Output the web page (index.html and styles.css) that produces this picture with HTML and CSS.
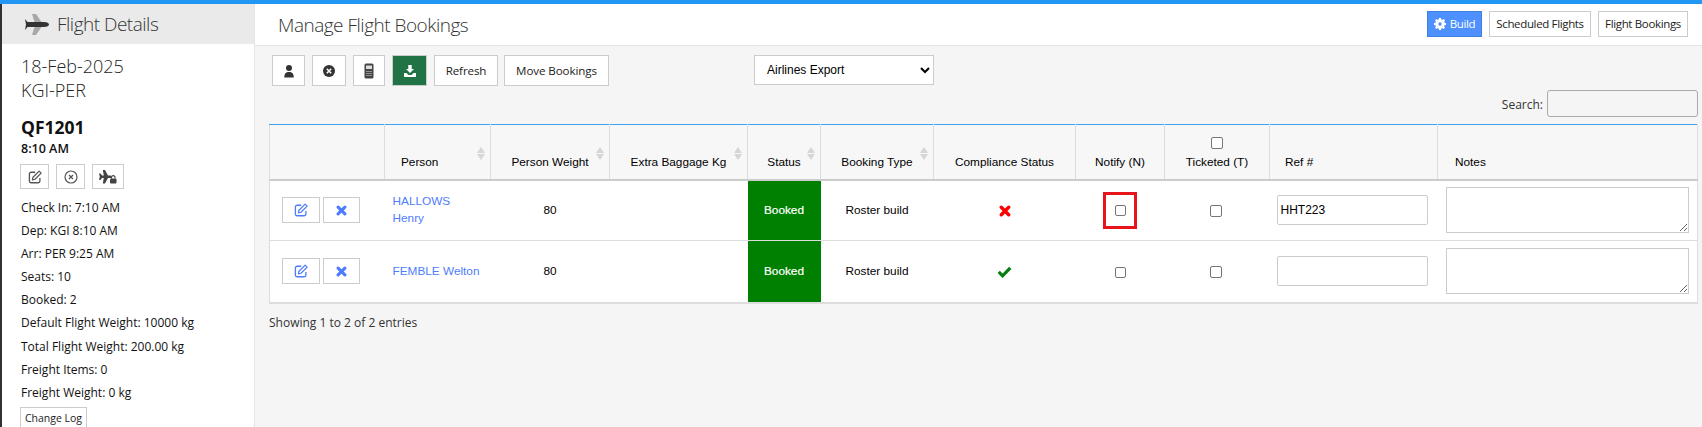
FILE: index.html
```html
<!DOCTYPE html>
<html lang="en">
<head>
<meta charset="utf-8">
<title>Manage Flight Bookings</title>
<link rel="stylesheet" href="styles.css">
</head>
<body>
<svg class="defs" width="0" height="0" aria-hidden="true">
  <symbol id="i-edit" viewBox="0 0 16 16"><path d="M8.200 2.600H3.600A2 2 0 0 0 1.600 4.600v8a2 2 0 0 0 2 2h8a2 2 0 0 0 2-2V9" fill="none" stroke="currentColor" stroke-width="1.500"/><path d="M12.700 1.300l2.300 2.300-7 7-3 .7.7-3z" fill="none" stroke="currentColor" stroke-width="1.400" stroke-linejoin="round"/></symbol>
  <symbol id="i-x" viewBox="0 0 12 12"><path d="M2.300 2.300l7.400 7.400M9.700 2.300l-7.400 7.400" fill="none" stroke="currentColor" stroke-width="3.400" stroke-linecap="round"/></symbol>
  <symbol id="i-check" viewBox="0 0 14 12"><path d="M1.600 6.400l3.600 3.600L12.400 2.600" fill="none" stroke="currentColor" stroke-width="3"/></symbol>
</svg>
<div class="topbar"></div>
<div class="app">
  <aside class="side">
    <div class="side-head">
      <svg class="side-plane" viewBox="0 0 24 21"><path d="M7 0h4l5.500 8h-7zM9.500 13h7L11 21H7z" fill="#a8a8a8"/><path d="M0 5l2.500 3H19c3 0 5 1.100 5 2.500S22 13 19 13H2.500L0 16l1-5.500z" fill="#333"/></svg>
      <h2 class="side-title">Flight Details</h2>
    </div>
    <div class="side-body">
      <div class="date">18-Feb-2025</div>
      <div class="date">KGI-PER</div>
      <div class="flight">QF1201</div>
      <div class="time">8:10 AM</div>
      <div class="side-actions">
        <button class="btn sq w29"><svg class="ic14"><use href="#i-edit"/></svg></button>
        <button class="btn sq w29"><svg class="ic14" viewBox="0 0 14 14"><circle cx="7" cy="7" r="6" fill="none" stroke="currentColor" stroke-width="1.200"/><path d="M5 5l4 4M9 5l-4 4" stroke="currentColor" stroke-width="1.300"/></svg></button>
        <button class="btn sq w32"><svg class="ic-lock" viewBox="0 0 18 14"><path d="M0 3.500h1.500L3 5.500h1.800L3.800 0h2.200l3 5.500h2c1 0 1.700.6 1.700 1.250S13 8 12 8H9l-3 5.500H3.800l1-5.500H3l-1.500 2H0l.8-3.250z" fill="#444"/><rect x="11" y="8.500" width="6.500" height="5" rx="1" fill="#444"/><path d="M12.500 8.500V7a1.800 1.800 0 0 1 3.500 0v1.500" fill="none" stroke="#444" stroke-width="1.100"/></svg></button>
      </div>
      <ul class="facts">
        <li><b>Check In:</b> 7:10 AM</li>
        <li><b>Dep:</b> KGI 8:10 AM</li>
        <li><b>Arr:</b> PER 9:25 AM</li>
        <li><b>Seats:</b> 10</li>
        <li><b>Booked:</b> 2</li>
        <li><b>Default Flight Weight:</b> 10000 kg</li>
        <li><b>Total Flight Weight:</b> 200.00 kg</li>
        <li><b>Freight Items:</b> 0</li>
        <li><b>Freight Weight:</b> 0 kg</li>
      </ul>
      <button class="btn log">Change Log</button>
    </div>
  </aside>
  <main class="main">
    <header class="head">
      <h1 class="title">Manage Flight Bookings</h1>
      <div class="head-actions">
        <button class="btn hb build"><svg class="ic12" viewBox="0 0 12 12"><path fill-rule="evenodd" d="M5 0h2l.3 1.600 1 .4L9.700 1l1.400 1.400-1 1.300.4 1L12 5v2l-1.600.3-.4 1 1 1.300-1.400 1.400-1.300-1-1 .4L7 12H5l-.3-1.600-1-.4-1.300 1-1.400-1.400 1-1.300-.4-1L0 7V5l1.600-.3.4-1-1-1.300L2.400 1l1.300 1 1-.4zM6 4.300a1.700 1.700 0 1 0 0 3.400 1.700 1.700 0 0 0 0-3.400z" fill="currentColor"/></svg>Build</button>
        <button class="btn hb sched">Scheduled Flights</button>
        <button class="btn hb fb">Flight Bookings</button>
      </div>
    </header>
    <div class="content">
      <div class="toolbar">
        <button class="btn tb w33"><svg class="ic14" viewBox="0 0 14 14"><circle cx="7" cy="4" r="3" fill="#333"/><path d="M2.300 13.500c0-4 1.500-5.500 4.700-5.500s4.700 1.500 4.700 5.500z" fill="#333"/></svg></button>
        <button class="btn tb w34"><svg class="ic14" viewBox="0 0 14 14"><circle cx="7" cy="7" r="6" fill="#333"/><path d="M4.800 4.800l4.400 4.400M9.200 4.800l-4.400 4.400" stroke="#fff" stroke-width="1.600"/></svg></button>
        <button class="btn tb w32"><svg class="ic16" viewBox="0 0 12 16"><rect x="1.500" y="0.500" width="9" height="15" rx="1.500" fill="#444"/><rect x="3" y="2.500" width="6" height="3.500" fill="#ddd"/><path d="M3.500 8h1v1h-1zM5.500 8h1v1h-1zM7.500 8h1v1h-1zM3.500 10h1v1h-1zM5.500 10h1v1h-1zM7.500 10h1v1h-1zM3.500 12h1v1h-1zM5.500 12h1v1h-1zM7.500 12h1v1h-1z" fill="#ddd"/></svg></button>
        <button class="btn tb w35 export"><svg class="ic14" viewBox="0 0 14 14"><path d="M5.300 1h3.400v4h2.300L7 9 3 5h2.300z" fill="#fff"/><path d="M1 9h2.500L5.500 11h3L10.500 9H13v4H1z" fill="#fff"/></svg></button>
        <button class="btn tb txt refresh">Refresh</button>
        <button class="btn tb txt move">Move Bookings</button>
        <select class="export-select"><option>Airlines Export</option></select>
      </div>
      <div class="search"><label class="search-label" for="q">Search:</label><input class="search-input" id="q" type="text"></div>
      <table class="grid">
        <colgroup>
          <col class="c1"><col class="c2"><col class="c3"><col class="c4"><col class="c5"><col class="c6"><col class="c7"><col class="c8"><col class="c9"><col class="c10"><col class="c11">
        </colgroup>
        <thead>
          <tr>
            <th></th>
            <th class="sort left-p">Person</th>
            <th class="sort">Person Weight</th>
            <th class="sort">Extra Baggage Kg</th>
            <th class="sort">Status</th>
            <th class="sort">Booking Type</th>
            <th>Compliance Status</th>
            <th>Notify (N)</th>
            <th><input class="chk head-chk" type="checkbox"><br>Ticketed (T)</th>
            <th class="left-r">Ref #</th>
            <th class="left-n">Notes</th>
          </tr>
        </thead>
        <tbody>
          <tr class="r1">
            <td><div class="row-actions"><button class="btn ra e"><svg class="ic14"><use href="#i-edit"/></svg></button><button class="btn ra d"><svg class="ic10"><use href="#i-x"/></svg></button></div></td>
            <td class="person"><a href="#">HALLOWS<br>Henry</a></td>
            <td class="ctr">80</td>
            <td></td>
            <td class="booked">Booked</td>
            <td class="ctr">Roster build</td>
            <td class="ctr"><svg class="ic11 red"><use href="#i-x"/></svg></td>
            <td class="ctr"><span class="hl"><input class="chk sm" type="checkbox"></span></td>
            <td class="ctr"><input class="chk tk" type="checkbox"></td>
            <td class="ref"><input class="ref-input" type="text" value="HHT223"></td>
            <td class="note"><textarea class="note-input"></textarea></td>
          </tr>
          <tr class="r2">
            <td><div class="row-actions"><button class="btn ra e"><svg class="ic14"><use href="#i-edit"/></svg></button><button class="btn ra d"><svg class="ic10"><use href="#i-x"/></svg></button></div></td>
            <td class="person"><a href="#">FEMBLE Welton</a></td>
            <td class="ctr">80</td>
            <td></td>
            <td class="booked">Booked</td>
            <td class="ctr">Roster build</td>
            <td class="ctr"><svg class="ic12c green"><use href="#i-check"/></svg></td>
            <td class="ctr"><input class="chk sm" type="checkbox"></td>
            <td class="ctr"><input class="chk tk" type="checkbox"></td>
            <td class="ref"><input class="ref-input" type="text"></td>
            <td class="note"><textarea class="note-input"></textarea></td>
          </tr>
        </tbody>
      </table>
      <div class="info">Showing 1 to 2 of 2 entries</div>
    </div>
  </main>
</div>
</body>
</html>
```
FILE: styles.css
```css
* { box-sizing: border-box; }
html, body { margin: 0; height: 427px; overflow: hidden; }
body { font-family: "Open Sans", sans-serif; font-size: 12px; color: #111; background: #f5f5f5; }
.defs { position: absolute; }
.topbar { height: 4px; background: #2196f3; }
.app { display: flex; height: 423px; }
.side { width: 253px; margin-left: 2px; flex: none; background: #fff; border-right: 1px solid #e5e5e5; box-shadow: -2px 0 0 #2f3338; overflow: hidden; }
.side-head { height: 40px; background: #eaeaea; display: flex; align-items: center; padding-left: 23px; gap: 8px; }
.side-plane { width: 24px; height: 21px; flex: none; }
.side-title { margin: 0; font-size: 19px; font-weight: 300; color: #333; letter-spacing: -0.5px; }
.side-body { padding: 10px 0 0 19px; }
.date { font-size: 18px; font-weight: 300; line-height: 24px; color: #222; }
.flight { font-size: 17.500px; font-weight: 700; line-height: 24px; margin-top: 13px; color: #111; }
.time { font-size: 12.500px; font-weight: 600; line-height: 16px; margin-top: 2px; color: #111; }
.side-actions { display: flex; gap: 7px; margin: 7px 0 0 -1px; }
.btn { background: #fff; border: 1px solid #ccc; font-family: "Open Sans", sans-serif; font-size: 12px; color: #222; padding: 0; display: inline-flex; align-items: center; justify-content: center; }
.sq { height: 25px; color: #555; }
.w29 { width: 29px; }
.w32 { width: 32px; }
.w33 { width: 33px; }
.w34 { width: 34px; }
.w35 { width: 35px; }
.ic14 { width: 14px; height: 14px; }
.ic16 { width: 12px; height: 16px; }
.ic12 { width: 12px; height: 12px; margin-right: 4px; }
.ic10 { width: 11px; height: 11px; }
.ic11 { width: 12px; height: 12px; vertical-align: middle; }
.ic12c { width: 15px; height: 13px; vertical-align: middle; }
.ic-lock { width: 18px; height: 14px; }
.facts { list-style: none; margin: 7px 0 0; padding: 0; }
.facts li { line-height: 23.100px; font-size: 12px; white-space: nowrap; }
.facts b { font-weight: 500; }
.log { width: 67px; height: 22px; font-size: 10.500px; margin: 3px 0 0 -1px; }
.main { flex: 1; min-width: 0; display: flex; flex-direction: column; }
.head { height: 42px; background: #fff; border-bottom: 1px solid #e6e6e6; display: flex; align-items: center; justify-content: space-between; padding: 0 14px 0 23px; flex: none; }
.title { margin: 0; font-size: 19px; font-weight: 300; color: #333; letter-spacing: -0.5px; }
.head-actions { display: flex; gap: 7px; margin-top: -2px; }
.hb { height: 26px; font-size: 11.500px; letter-spacing: -0.35px; }
.build { background: #4d90fe; color: #fff; border-color: #3f7fe0; width: 55px; }
.sched { width: 102px; }
.fb { width: 90px; }
.content { padding: 9px 4px 0 14px; }
.toolbar { display: flex; align-items: flex-start; gap: 7px; height: 31px; padding-left: 3px; }
.tb { height: 31px; }
.export { background: #217346; border-color: #ccc; }
.txt { font-size: 11.600px; letter-spacing: -0.1px; }
.refresh { width: 64px; }
.move { width: 105px; margin-left: -1px; }
.export-select { margin-left: 138px; width: 180px; height: 30px; font-family: "Liberation Sans", sans-serif; font-size: 12px; border: 1px solid #ccc; background: #fff; border-radius: 0; padding-left: 8px; color: #000; }
.search { display: flex; justify-content: flex-end; align-items: center; gap: 4px; height: 27px; margin-top: 4px; }
.search-label { font-size: 12px; font-weight: 500; color: #333; padding-top: 2px; }
.search-input { width: 151px; height: 27px; border: 1px solid #aaa; border-radius: 3px; background: #f5f5f5; }
.grid { width: 1429px; margin-top: 7px; table-layout: fixed; border-collapse: collapse; background: #fff; border-top: 1px solid #3fa0f2; font-family: "Liberation Sans", sans-serif; font-size: 11.800px; color: #000; border-left: 1px solid #ddd; border-right: 1px solid #ddd; border-bottom: 2px solid #ddd; }
.c1 { width: 115px; } .c2 { width: 106px; } .c3 { width: 119px; } .c4 { width: 138px; } .c5 { width: 73px; } .c6 { width: 113px; } .c7 { width: 142px; } .c8 { width: 89px; } .c9 { width: 105px; } .c10 { width: 168px; } .c11 { width: 260px; }
th { height: 55px; background: #f7f7f7; font-weight: 400; color: #000; vertical-align: bottom; text-align: center; padding: 0 4px 10px; border-left: 1px solid #ddd; border-bottom: 2px solid #ccc; position: relative; }
th:first-child { border-left: 0; }
.left-p { text-align: left; padding-left: 16px; }
.left-r { text-align: left; padding-left: 15px; }
.left-n { text-align: left; padding-left: 17px; }
.sort::before, .sort::after { content: ""; position: absolute; right: 5px; width: 0; height: 0; border-left: 4px solid transparent; border-right: 4px solid transparent; }
.sort::before { top: 22px; border-bottom: 6px solid #d6d6d6; }
.sort::after { top: 29px; border-top: 6px solid #d6d6d6; }
td { height: 61px; padding: 0; border-bottom: 1px solid #ddd; vertical-align: middle; }
.r2 td { height: 62px; border-bottom: 0; }
.ctr { text-align: center; }
.row-actions { display: flex; gap: 3px; padding-left: 12px; }
.ra { height: 26px; color: #4d7cfe; }
.e { width: 38px; }
.d { width: 37px; }
.person { padding-left: 8px; line-height: 17px; }
.person a { color: #4d7cfe; text-decoration: none; }
.booked { background: #008000; color: #fff; text-align: center; font-weight: 400; -webkit-text-stroke: 0.2px #fff; }
.red { color: #f00; }
.green { color: #0a7d12; }
.chk { appearance: none; width: 12px; height: 12px; margin: 0; vertical-align: middle; background: #fff; border: 1px solid #767676; border-radius: 2px; }
.sm { width: 11px; height: 11px; }
.tk { margin-right: 2px; }
.head-chk { margin-bottom: 6px; }
.hl { display: inline-flex; width: 34px; height: 37px; border: 3px solid #e8141c; align-items: center; justify-content: center; vertical-align: middle; }
.ref { padding: 0 10px 0 7px; }
.ref-input { width: 100%; height: 30px; border: 1px solid #ccc; border-radius: 2px; padding: 0 3px; font-family: "Liberation Sans", sans-serif; font-size: 12px; color: #000; display: block; }
.note { padding: 0 8px; }
.note-input { width: 100%; height: 46px; display: block; border: 1px solid #ccc; font-family: "Liberation Sans", sans-serif; }
.info { margin-top: 10px; font-size: 12px; color: #333; }
```
